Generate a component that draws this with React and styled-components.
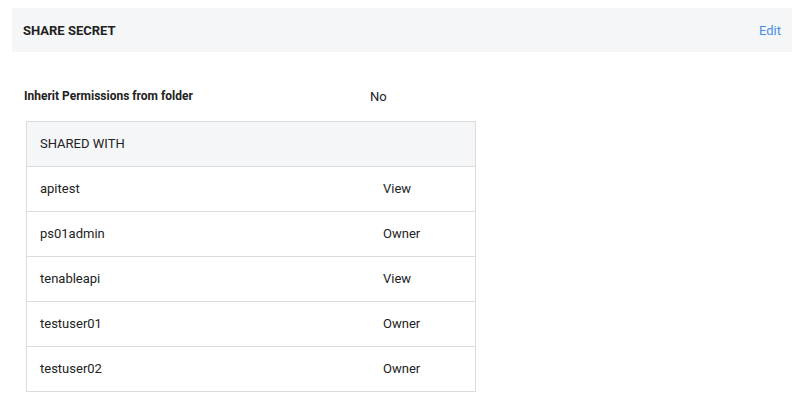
import React from "react";
import styled, { createGlobalStyle } from "styled-components";

const Global = createGlobalStyle`
  html, body { margin: 0; padding: 0; background: #fff; }
  body { font-family: Roboto, "Liberation Sans", Arial, sans-serif; color: #222; }
`;

const Page = styled.div`
  padding: 8px 20px 0 12px;
`;

const HeaderBar = styled.div`
  height: 44px;
  background: #f5f6f8;
  display: flex;
  align-items: center;
  justify-content: space-between;
  padding: 0 11px;
`;

const Title = styled.h2`
  margin: 0;
  font-size: 13px;
  font-weight: 700;
  color: #222;
  text-transform: uppercase;
`;

const EditLink = styled.a`
  font-size: 13px;
  color: #4a8fe7;
  text-decoration: none;
  cursor: pointer;
`;

const InfoRow = styled.div`
  display: grid;
  grid-template-columns: 346px 1fr;
  align-items: center;
  height: 26px;
  margin-top: 31px;
  padding-left: 12px;
  font-size: 12px;
`;

const InfoLabel = styled.span`
  font-weight: 700;
  color: #222;
`;

const InfoValue = styled.span`
  font-size: 13px;
  color: #222;
`;

const Table = styled.div`
  margin: 12px 0 0 14px;
  width: 450px;
  border: 1px solid #dcdcdc;
  box-sizing: border-box;
`;

const Row = styled.div`
  display: grid;
  grid-template-columns: 343px 1fr;
  align-items: center;
  padding: 0 13px 2px;
  font-size: 13px;
  color: #222;
  background: ${(p) => (p.$head ? "#f5f6f8" : "#fff")};
  border-top: ${(p) => (p.$first ? "none" : "1px solid #dcdcdc")};
  box-sizing: border-box;
  height: ${(p) => (p.$first ? "44px" : "45px")};
`;

const data = [
  ["apitest", "View"],
  ["ps01admin", "Owner"],
  ["tenableapi", "View"],
  ["testuser01", "Owner"],
  ["testuser02", "Owner"],
];

export default function App() {
  return (
    <Page>
      <Global />
      <HeaderBar>
        <Title>Share Secret</Title>
        <EditLink>Edit</EditLink>
      </HeaderBar>
      <InfoRow>
        <InfoLabel>Inherit Permissions from folder</InfoLabel>
        <InfoValue>No</InfoValue>
      </InfoRow>
      <Table>
        <Row $head $first>
          <span>SHARED WITH</span>
          <span />
        </Row>
        {data.map(([u, p]) => (
          <Row key={u}>
            <span>{u}</span>
            <span>{p}</span>
          </Row>
        ))}
      </Table>
    </Page>
  );
}
